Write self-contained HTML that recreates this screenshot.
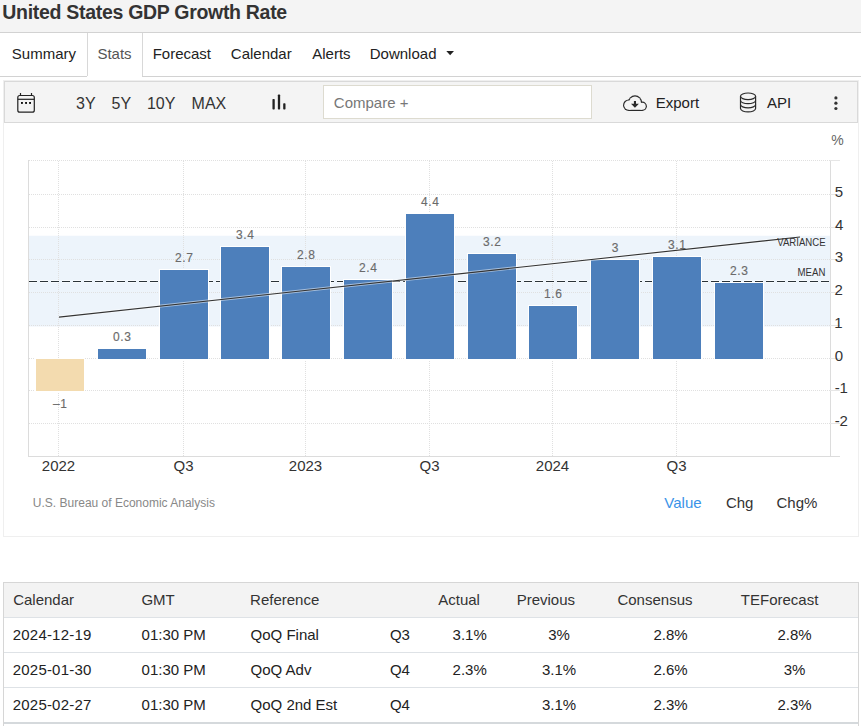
<!DOCTYPE html>
<html><head><meta charset="utf-8">
<style>
html,body{margin:0;padding:0;background:#fff;}
body{width:861px;height:726px;overflow:hidden;position:relative;font-family:"Liberation Sans",sans-serif;}
.abs{position:absolute;}
svg text{font-family:"Liberation Sans",sans-serif;}
</style></head><body>
<div class="abs" style="left:0;top:0;width:861px;height:32px;background:#f4f4f4;border-bottom:1px solid #d2d2d2;"></div>
<div class="abs" style="left:0;top:76px;width:87px;height:1px;background:#d2d2d2;"></div>
<div class="abs" style="left:142px;top:76px;width:719px;height:1px;background:#d2d2d2;"></div>
<div class="abs" style="left:87px;top:33px;width:1px;height:43px;background:#d8d8d8;"></div>
<div class="abs" style="left:142px;top:33px;width:1px;height:43px;background:#d8d8d8;"></div>
<div class="abs" style="left:3px;top:80px;width:854px;height:455px;border:1px solid #efefef;"></div>
<div class="abs" style="left:4px;top:81px;width:852px;height:40px;background:#f4f4f4;border:1px solid #d9d9d9;"></div>
<div class="abs" style="left:323px;top:85px;width:267px;height:32px;background:#fff;border:1px solid #dddbd0;"></div>
<div class="abs" style="left:3px;top:582px;width:854px;height:150px;border:1px solid #d6d6d6;border-bottom:none;"></div>
<div class="abs" style="left:4px;top:583px;width:854px;height:34px;background:#f3f3f3;border-bottom:1px solid #dee2e6;"></div>
<div class="abs" style="left:4px;top:652px;width:854px;height:1px;background:#dee2e6;"></div>
<div class="abs" style="left:4px;top:687px;width:854px;height:1px;background:#dee2e6;"></div>
<div class="abs" style="left:4px;top:722px;width:854px;height:2px;background:#d5d9dc;"></div>
<svg class="abs" style="left:0;top:0" width="861" height="726" viewBox="0 0 861 726">
<rect x="28" y="235.75" width="802" height="90.75" fill="#edf4fb"/>
<line x1="29" y1="160.5" x2="830" y2="160.5" stroke="#e0e0e0" stroke-dasharray="1,1"/><line x1="29" y1="194.5" x2="830" y2="194.5" stroke="#e0e0e0" stroke-dasharray="1,1"/><line x1="29" y1="227.5" x2="830" y2="227.5" stroke="#e0e0e0" stroke-dasharray="1,1"/><line x1="29" y1="259.5" x2="830" y2="259.5" stroke="#e0e0e0" stroke-dasharray="1,1"/><line x1="29" y1="292.5" x2="830" y2="292.5" stroke="#e0e0e0" stroke-dasharray="1,1"/><line x1="29" y1="325.5" x2="830" y2="325.5" stroke="#e0e0e0" stroke-dasharray="1,1"/><line x1="29" y1="358.5" x2="830" y2="358.5" stroke="#e0e0e0" stroke-dasharray="1,1"/><line x1="29" y1="390.5" x2="830" y2="390.5" stroke="#e0e0e0" stroke-dasharray="1,1"/><line x1="29" y1="423.5" x2="830" y2="423.5" stroke="#e0e0e0" stroke-dasharray="1,1"/><line x1="58.5" y1="161" x2="58.5" y2="456" stroke="#e0e0e0" stroke-dasharray="1,1"/><line x1="183.5" y1="161" x2="183.5" y2="456" stroke="#e0e0e0" stroke-dasharray="1,1"/><line x1="305.5" y1="161" x2="305.5" y2="456" stroke="#e0e0e0" stroke-dasharray="1,1"/><line x1="429.5" y1="161" x2="429.5" y2="456" stroke="#e0e0e0" stroke-dasharray="1,1"/><line x1="552.5" y1="161" x2="552.5" y2="456" stroke="#e0e0e0" stroke-dasharray="1,1"/><line x1="676.5" y1="161" x2="676.5" y2="456" stroke="#e0e0e0" stroke-dasharray="1,1"/>
<line x1="28.5" y1="160" x2="28.5" y2="456" stroke="#dcdcdc"/>
<line x1="830.5" y1="160" x2="830.5" y2="456" stroke="#dcdcdc"/>
<line x1="28" y1="456.5" x2="840" y2="456.5" stroke="#dcdcdc"/>
<line x1="830" y1="160.5" x2="840" y2="160.5" stroke="#e6e6e6"/><line x1="830" y1="194.5" x2="840" y2="194.5" stroke="#e6e6e6"/><line x1="830" y1="227.5" x2="840" y2="227.5" stroke="#e6e6e6"/><line x1="830" y1="259.5" x2="840" y2="259.5" stroke="#e6e6e6"/><line x1="830" y1="292.5" x2="840" y2="292.5" stroke="#e6e6e6"/><line x1="830" y1="325.5" x2="840" y2="325.5" stroke="#e6e6e6"/><line x1="830" y1="358.5" x2="840" y2="358.5" stroke="#e6e6e6"/><line x1="830" y1="390.5" x2="840" y2="390.5" stroke="#e6e6e6"/><line x1="830" y1="423.5" x2="840" y2="423.5" stroke="#e6e6e6"/>
<line x1="29" y1="281.5" x2="830" y2="281.5" stroke="#fff" stroke-width="3" stroke-opacity="0.6" stroke-dasharray="8,3"/>
<line x1="29" y1="281.5" x2="830" y2="281.5" stroke="#2b3338" stroke-width="1.1" stroke-dasharray="8,3"/>
<rect x="35.5" y="358.5" width="49" height="33" fill="#f3dbaf" stroke="#fff" stroke-width="1"/><rect x="97.5" y="348.5" width="49" height="11.0" fill="#4d7fbb" stroke="#fff" stroke-width="1"/><rect x="159.5" y="269.5" width="49" height="90.0" fill="#4d7fbb" stroke="#fff" stroke-width="1"/><rect x="220.5" y="246.5" width="49" height="113.0" fill="#4d7fbb" stroke="#fff" stroke-width="1"/><rect x="281.5" y="266.5" width="49" height="93.0" fill="#4d7fbb" stroke="#fff" stroke-width="1"/><rect x="343.5" y="279.5" width="49" height="80.0" fill="#4d7fbb" stroke="#fff" stroke-width="1"/><rect x="405.5" y="213.5" width="49" height="146.0" fill="#4d7fbb" stroke="#fff" stroke-width="1"/><rect x="467.5" y="253.5" width="49" height="106.0" fill="#4d7fbb" stroke="#fff" stroke-width="1"/><rect x="528.5" y="305.5" width="49" height="54.0" fill="#4d7fbb" stroke="#fff" stroke-width="1"/><rect x="590.5" y="259.5" width="49" height="100.0" fill="#4d7fbb" stroke="#fff" stroke-width="1"/><rect x="652.5" y="256.5" width="49" height="103.0" fill="#4d7fbb" stroke="#fff" stroke-width="1"/><rect x="714.5" y="282.5" width="49" height="77.0" fill="#4d7fbb" stroke="#fff" stroke-width="1"/>
<line x1="59" y1="317.1" x2="800" y2="237" stroke="#fff" stroke-width="3" stroke-opacity="0.5"/>
<line x1="59" y1="317.1" x2="800" y2="237" stroke="#333" stroke-width="1.1"/>
<text x="777.3" y="246.1" font-size="11" fill="#333" textLength="48.3" lengthAdjust="spacingAndGlyphs">VARIANCE</text>
<text x="797.6" y="276.1" font-size="11" fill="#333" textLength="27.8" lengthAdjust="spacingAndGlyphs">MEAN</text>

<!-- calendar icon -->
<g fill="none" stroke="#222" stroke-width="1.2">
<rect x="17.8" y="95.5" width="16.5" height="16.7" rx="2"/>
<line x1="17.8" y1="99.3" x2="34.3" y2="99.3"/>
<line x1="20.5" y1="93" x2="20.5" y2="95.5"/>
<line x1="31.5" y1="93" x2="31.5" y2="95.5"/>
</g>
<g fill="#111"><rect x="21" y="102" width="1.9" height="1.9"/><rect x="25.1" y="102" width="1.9" height="1.9"/><rect x="29.1" y="102" width="1.9" height="1.9"/></g>
<!-- bars icon -->
<g fill="#222"><rect x="272.45" y="99.1" width="2.3" height="10.4" rx="0.7"/><rect x="277.85" y="94.6" width="2.3" height="14.9" rx="0.7"/><rect x="283.2" y="103.2" width="2.3" height="6.3" rx="0.7"/></g>
<!-- caret -->
<path d="M446.3 51 L454 51 L450.15 55.2 Z" fill="#222"/>
<!-- cloud -->
<g transform="translate(622,94)">
<g fill="#2a2a2a"><circle cx="6.8" cy="11.2" r="5.8"/><circle cx="13" cy="8.4" r="7.1"/><circle cx="20.2" cy="12.3" r="4.7"/><rect x="6.8" y="10" width="13.4" height="7.0"/></g>
<g fill="#f4f4f4"><circle cx="6.8" cy="11.2" r="4.6"/><circle cx="13" cy="8.4" r="5.9"/><circle cx="20.2" cy="12.3" r="3.5"/><rect x="6.8" y="9" width="13.4" height="6.8"/></g>
<rect x="11.9" y="7" width="2.1" height="3.3" fill="#2a2a2a"/>
<path d="M9 9.8 L16.9 9.8 L12.95 13.7 Z" fill="#2a2a2a"/>
</g>
<!-- database -->
<g fill="none" stroke="#2a2a2a" stroke-width="1.2">
<ellipse cx="748.05" cy="96.3" rx="7.55" ry="3.3"/>
<path d="M740.5 96.3 V108.6 A7.55 3.3 0 0 0 755.6 108.6 V96.3"/>
<path d="M740.5 100.4 A7.55 3.3 0 0 0 755.6 100.4"/>
<path d="M740.5 104.5 A7.55 3.3 0 0 0 755.6 104.5"/>
</g>
<!-- kebab -->
<g fill="#333"><circle cx="835.9" cy="97.9" r="1.6"/><circle cx="835.9" cy="103.2" r="1.6"/><circle cx="835.9" cy="108.5" r="1.6"/></g>
<text x="2.33" y="18.70" font-size="19.5" font-weight="bold" fill="#333" letter-spacing="-0.3">United States GDP Growth Rate</text><text x="11.82" y="58.70" font-size="15" font-weight="normal" fill="#222">Summary</text><text x="97.42" y="58.70" font-size="15" font-weight="normal" fill="#555">Stats</text><text x="152.67" y="58.70" font-size="15" font-weight="normal" fill="#222">Forecast</text><text x="230.84" y="58.70" font-size="15" font-weight="normal" fill="#222">Calendar</text><text x="312.27" y="58.70" font-size="15" font-weight="normal" fill="#222">Alerts</text><text x="369.77" y="58.70" font-size="15" font-weight="normal" fill="#222">Download</text><text x="75.99" y="109.20" font-size="16" font-weight="normal" fill="#333">3Y</text><text x="111.56" y="109.20" font-size="16" font-weight="normal" fill="#333">5Y</text><text x="146.98" y="109.20" font-size="16" font-weight="normal" fill="#333">10Y</text><text x="191.59" y="109.20" font-size="16" font-weight="normal" fill="#333">MAX</text><text x="333.84" y="107.80" font-size="15" font-weight="normal" fill="#777">Compare +</text><text x="655.77" y="107.60" font-size="15" font-weight="normal" fill="#222">Export</text><text x="767.07" y="107.90" font-size="15" font-weight="normal" fill="#222">API</text><text x="831.30" y="145.00" font-size="14" font-weight="normal" fill="#666">%</text><text x="834.70" y="197.20" font-size="15" font-weight="normal" fill="#333">5</text><text x="834.96" y="230.20" font-size="15" font-weight="normal" fill="#333">4</text><text x="834.73" y="262.20" font-size="15" font-weight="normal" fill="#333">3</text><text x="834.55" y="295.20" font-size="15" font-weight="normal" fill="#333">2</text><text x="834.16" y="328.20" font-size="15" font-weight="normal" fill="#333">1</text><text x="834.71" y="361.20" font-size="15" font-weight="normal" fill="#333">0</text><text x="834.63" y="393.20" font-size="15" font-weight="normal" fill="#333">-1</text><text x="834.63" y="426.20" font-size="15" font-weight="normal" fill="#333">-2</text><text x="58.50" y="471.00" font-size="15" font-weight="normal" fill="#333" text-anchor="middle">2022</text><text x="183.50" y="471.00" font-size="15" font-weight="normal" fill="#333" text-anchor="middle">Q3</text><text x="305.50" y="471.00" font-size="15" font-weight="normal" fill="#333" text-anchor="middle">2023</text><text x="429.50" y="471.00" font-size="15" font-weight="normal" fill="#333" text-anchor="middle">Q3</text><text x="552.50" y="471.00" font-size="15" font-weight="normal" fill="#333" text-anchor="middle">2024</text><text x="676.50" y="471.00" font-size="15" font-weight="normal" fill="#333" text-anchor="middle">Q3</text><text x="60.30" y="408.30" font-size="12" font-weight="normal" fill="#6a6a6a" text-anchor="middle" letter-spacing="0.6" stroke="#707070" stroke-width="0.15">–1</text><text x="122.30" y="341.00" font-size="12" font-weight="normal" fill="#6a6a6a" text-anchor="middle" letter-spacing="0.6" stroke="#707070" stroke-width="0.15">0.3</text><text x="184.30" y="262.00" font-size="12" font-weight="normal" fill="#6a6a6a" text-anchor="middle" letter-spacing="0.6" stroke="#707070" stroke-width="0.15">2.7</text><text x="245.30" y="239.00" font-size="12" font-weight="normal" fill="#6a6a6a" text-anchor="middle" letter-spacing="0.6" stroke="#707070" stroke-width="0.15">3.4</text><text x="306.30" y="259.00" font-size="12" font-weight="normal" fill="#6a6a6a" text-anchor="middle" letter-spacing="0.6" stroke="#707070" stroke-width="0.15">2.8</text><text x="368.30" y="272.00" font-size="12" font-weight="normal" fill="#6a6a6a" text-anchor="middle" letter-spacing="0.6" stroke="#707070" stroke-width="0.15">2.4</text><text x="430.30" y="206.00" font-size="12" font-weight="normal" fill="#6a6a6a" text-anchor="middle" letter-spacing="0.6" stroke="#707070" stroke-width="0.15">4.4</text><text x="492.30" y="246.00" font-size="12" font-weight="normal" fill="#6a6a6a" text-anchor="middle" letter-spacing="0.6" stroke="#707070" stroke-width="0.15">3.2</text><text x="553.30" y="298.00" font-size="12" font-weight="normal" fill="#6a6a6a" text-anchor="middle" letter-spacing="0.6" stroke="#707070" stroke-width="0.15">1.6</text><text x="615.30" y="252.00" font-size="12" font-weight="normal" fill="#6a6a6a" text-anchor="middle" letter-spacing="0.6" stroke="#707070" stroke-width="0.15">3</text><text x="677.30" y="249.00" font-size="12" font-weight="normal" fill="#6a6a6a" text-anchor="middle" letter-spacing="0.6" stroke="#707070" stroke-width="0.15">3.1</text><text x="739.30" y="275.00" font-size="12" font-weight="normal" fill="#6a6a6a" text-anchor="middle" letter-spacing="0.6" stroke="#707070" stroke-width="0.15">2.3</text><text x="32.87" y="507.10" font-size="12" font-weight="normal" fill="#888">U.S. Bureau of Economic Analysis</text><text x="664.33" y="507.60" font-size="15" font-weight="normal" fill="#3a93e8">Value</text><text x="725.94" y="507.60" font-size="15" font-weight="normal" fill="#333">Chg</text><text x="776.54" y="507.60" font-size="15" font-weight="normal" fill="#333">Chg%</text><text x="13.14" y="604.90" font-size="15" font-weight="normal" fill="#333">Calendar</text><text x="141.45" y="604.90" font-size="15" font-weight="normal" fill="#333">GMT</text><text x="250.07" y="604.90" font-size="15" font-weight="normal" fill="#333">Reference</text><text x="438.27" y="604.90" font-size="15" font-weight="normal" fill="#333">Actual</text><text x="516.67" y="604.90" font-size="15" font-weight="normal" fill="#333">Previous</text><text x="617.44" y="604.90" font-size="15" font-weight="normal" fill="#333">Consensus</text><text x="740.86" y="604.90" font-size="15" font-weight="normal" fill="#333">TEForecast</text><text x="12.75" y="639.80" font-size="15" font-weight="normal" fill="#222" letter-spacing="0.2">2024-12-19</text><text x="141.61" y="639.80" font-size="15" font-weight="normal" fill="#222">01:30 PM</text><text x="250.59" y="639.80" font-size="15" font-weight="normal" fill="#222">QoQ Final</text><text x="389.89" y="639.80" font-size="15" font-weight="normal" fill="#222">Q3</text><text x="469.70" y="639.80" font-size="15" font-weight="normal" fill="#222" text-anchor="middle">3.1%</text><text x="559.05" y="639.80" font-size="15" font-weight="normal" fill="#222" text-anchor="middle">3%</text><text x="670.60" y="639.80" font-size="15" font-weight="normal" fill="#222" text-anchor="middle">2.8%</text><text x="794.50" y="639.80" font-size="15" font-weight="normal" fill="#222" text-anchor="middle">2.8%</text><text x="12.75" y="674.80" font-size="15" font-weight="normal" fill="#222" letter-spacing="0.2">2025-01-30</text><text x="141.61" y="674.80" font-size="15" font-weight="normal" fill="#222">01:30 PM</text><text x="250.59" y="674.80" font-size="15" font-weight="normal" fill="#222">QoQ Adv</text><text x="389.89" y="674.80" font-size="15" font-weight="normal" fill="#222">Q4</text><text x="469.70" y="674.80" font-size="15" font-weight="normal" fill="#222" text-anchor="middle">2.3%</text><text x="559.05" y="674.80" font-size="15" font-weight="normal" fill="#222" text-anchor="middle">3.1%</text><text x="670.60" y="674.80" font-size="15" font-weight="normal" fill="#222" text-anchor="middle">2.6%</text><text x="794.50" y="674.80" font-size="15" font-weight="normal" fill="#222" text-anchor="middle">3%</text><text x="12.75" y="709.80" font-size="15" font-weight="normal" fill="#222" letter-spacing="0.2">2025-02-27</text><text x="141.61" y="709.80" font-size="15" font-weight="normal" fill="#222">01:30 PM</text><text x="250.59" y="709.80" font-size="15" font-weight="normal" fill="#222">QoQ 2nd Est</text><text x="389.89" y="709.80" font-size="15" font-weight="normal" fill="#222">Q4</text><text x="559.05" y="709.80" font-size="15" font-weight="normal" fill="#222" text-anchor="middle">3.1%</text><text x="670.60" y="709.80" font-size="15" font-weight="normal" fill="#222" text-anchor="middle">2.3%</text><text x="794.50" y="709.80" font-size="15" font-weight="normal" fill="#222" text-anchor="middle">2.3%</text>
</svg>
</body></html>
